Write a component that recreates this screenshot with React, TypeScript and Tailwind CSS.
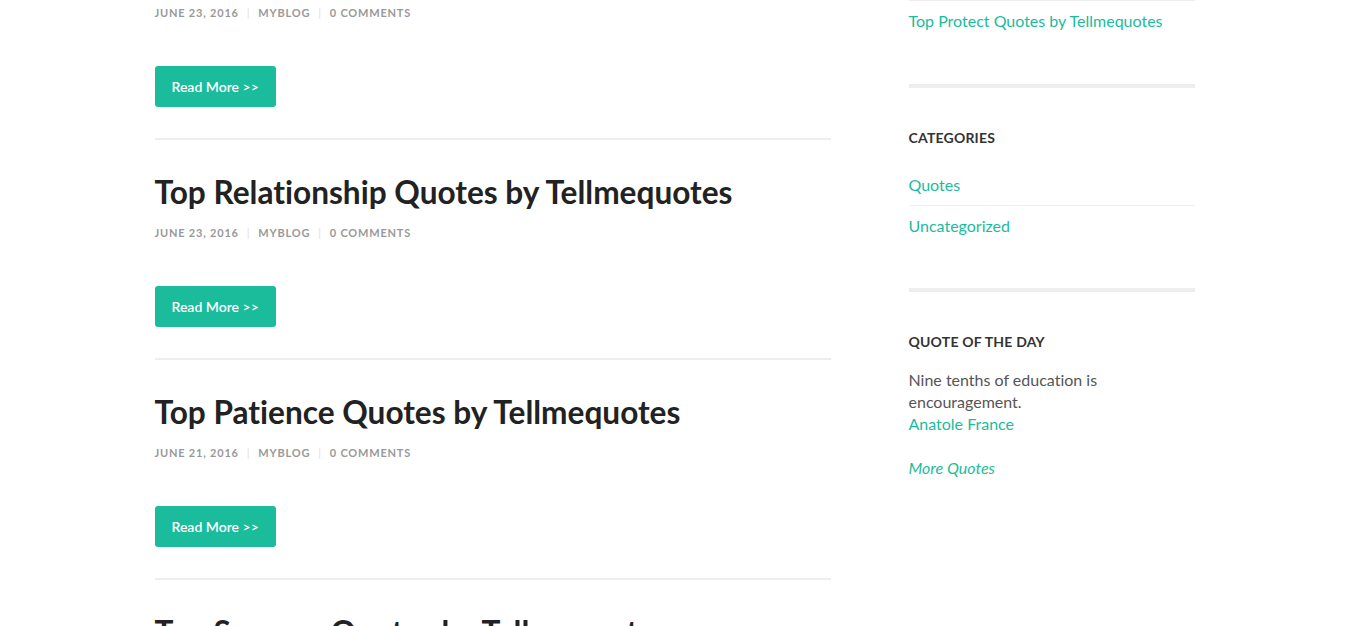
const posts = [
  { title: "", date: "June 23, 2016" },
  { title: "Top Relationship Quotes by Tellmequotes", date: "June 23, 2016" },
  { title: "Top Patience Quotes by Tellmequotes", date: "June 21, 2016" },
  { title: "Top Success Quotes by Tellmequotes", date: "June 21, 2016" },
];

function Meta({ date }: { date: string }) {
  return (
    <div className="flex h-5 items-center text-[11px] font-bold uppercase leading-5 tracking-[0.8px] text-[#999]">
      <span>{date}</span>
      <span className="px-[8px] font-normal text-[#ddd]">|</span>
      <span>myblog</span>
      <span className="px-[8px] font-normal text-[#ddd]">|</span>
      <span>0 Comments</span>
    </div>
  );
}

function Post({ title, date, last }: { title: string; date: string; last: boolean }) {
  return (
    <article className={title ? "pt-8" : "pt-[3px]"}>
      {title && (
        <h2 className="mb-[11px] text-[31.6px] font-bold leading-10 text-[#222]">
          <a href="#">{title}</a>
        </h2>
      )}
      <Meta date={date} />
      {!last && (
        <>
          <a
            href="#"
            className="mt-[43px] inline-flex h-[41px] items-center rounded-[3px] bg-[#1abc9c] px-[17px] text-[14px] font-semibold text-white"
          >
            Read More &gt;&gt;
          </a>
          <div className="mt-[31px] border-t-2 border-[#eee]" />
        </>
      )}
    </article>
  );
}

export default function App() {
  return (
    <div className="h-[626px] overflow-hidden bg-white font-['Lato','Open_Sans',sans-serif] [font-variant-ligatures:none]">
      <div className="mx-auto flex w-[1040px] items-start gap-[78px]">
        {/* Main column */}
        <main className="w-[676px]">
          {posts.map((p, i) => (
            <Post key={i} title={p.title} date={p.date} last={i === posts.length - 1} />
          ))}
        </main>

        {/* Sidebar */}
        <aside className="w-[286px] text-[16px] leading-[22px] text-[#555]">
          <div className="border-t border-[#eee] pt-[9px]">
            <a href="#" className="text-[#1abc9c]">
              Top Protect Quotes by Tellmequotes
            </a>
          </div>
          <div className="mt-[52px] border-t-4 border-[#eee]" />

          <h3 className="mt-[40px] text-[14px] font-bold uppercase leading-5 tracking-[0.2px] text-[#333]">
            Categories
          </h3>
          <ul className="mt-[26px]">
            <li className="border-b border-[#eee] pb-[9px]">
              <a href="#" className="text-[#1abc9c]">Quotes</a>
            </li>
            <li className="pt-[9px]">
              <a href="#" className="text-[#1abc9c]">Uncategorized</a>
            </li>
          </ul>
          <div className="mt-[51px] border-t-4 border-[#eee]" />

          <h3 className="mt-[40px] text-[14px] font-bold uppercase leading-5 tracking-[0.2px] text-[#333]">
            Quote of the Day
          </h3>
          <div className="mt-[17px] w-[210px]">
            <p>Nine tenths of education is encouragement.</p>
            <a href="#" className="text-[#1abc9c]">Anatole France</a>
          </div>
          <p className="mt-[22px]">
            <a href="#" className="italic text-[#1abc9c]">More Quotes</a>
          </p>
        </aside>
      </div>
    </div>
  );
}
